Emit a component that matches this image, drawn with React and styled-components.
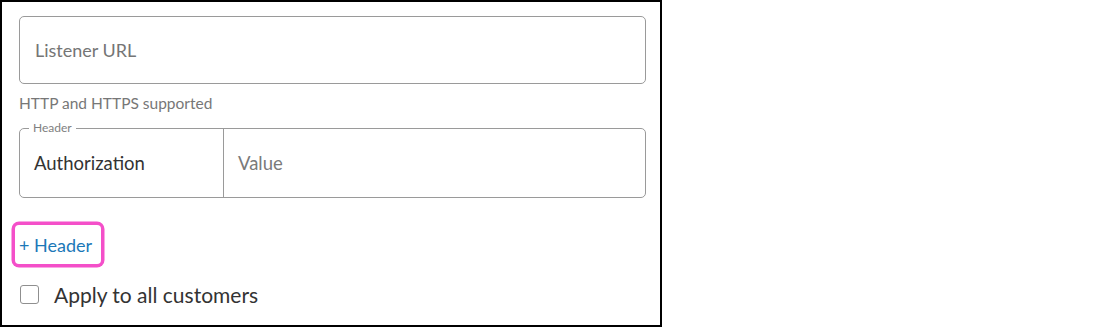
import React from "react"
import styled, { createGlobalStyle } from "styled-components"

const GlobalStyle = createGlobalStyle`
  html, body {
    margin: 0;
    padding: 0;
    background: #fff;
  }
  body {
    font-family: "Lato", "Liberation Sans", sans-serif;
    color: #333;
  }
`

const Frame = styled.div`
  box-sizing: border-box;
  width: 662px;
  height: 327px;
  border: 2px solid #000;
  padding: 14px 14px 0 17px;
  display: flex;
  flex-direction: column;
`

const TextBox = styled.div`
  box-sizing: border-box;
  height: 68px;
  border: 1px solid #9a9a9a;
  border-radius: 5px;
  display: flex;
  align-items: center;
  padding: 0 15px;
  font-size: 18px;
  color: #757575;
`

const Helper = styled.div`
  margin-top: 9px;
  font-size: 15.5px;
  line-height: 20px;
  color: #777;
`

const Group = styled.fieldset`
  box-sizing: border-box;
  margin: 9px 0 0;
  padding: 0;
  border: 1px solid #9a9a9a;
  border-radius: 5px;
  min-width: 0;
`

const Legend = styled.legend`
  margin-left: 9px;
  padding: 0 4px 0 4px;
  font-size: 12px;
  line-height: 12px;
  color: #808080;
`

const Row = styled.div`
  display: flex;
  height: 69px;
  margin-top: -6px;
`

const Cell = styled.div`
  box-sizing: border-box;
  display: flex;
  align-items: center;
  padding: 0 14px;
  font-size: 18.5px;
  color: ${p => (p.$muted ? "#7a7a7a" : "#333")};
  width: ${p => (p.$w ? p.$w : "auto")};
  flex: ${p => (p.$w ? "none" : "1")};
  border-right: ${p => (p.$divided ? "1px solid #9a9a9a" : "none")};
`

const AddLink = styled.a`
  box-sizing: border-box;
  align-self: flex-start;
  margin: 27px 0 0 -4px;
  height: 39px;
  width: 86px;
  padding: 0 4px;
  display: flex;
  align-items: center;
  font-size: 18px;
  color: #1b78b8;
  text-decoration: none;
  border-radius: 4px;
  box-shadow: 0 0 0 3.5px #f44fc9;
  cursor: pointer;
`

const CheckRow = styled.label`
  margin-top: 18px;
  display: flex;
  align-items: center;
  gap: 15px;
  font-size: 21px;
  color: #333;
`

const Box = styled.span`
  box-sizing: border-box;
  width: 19px;
  height: 19px;
  margin-left: 1px;
  border: 1.5px solid #8f8f8f;
  border-radius: 3px;
  background: #fff;
`

const App = () => {
  return (
    <>
      <GlobalStyle />
      <Frame>
        <TextBox>Listener URL</TextBox>
        <Helper>HTTP and HTTPS supported</Helper>
        <Group>
          <Legend>Header</Legend>
          <Row>
            <Cell $w="204px" $divided>Authorization</Cell>
            <Cell $muted>Value</Cell>
          </Row>
        </Group>
        <AddLink>+ Header</AddLink>
        <CheckRow>
          <Box />
          Apply to all customers
        </CheckRow>
      </Frame>
    </>
  )
}

export default App
